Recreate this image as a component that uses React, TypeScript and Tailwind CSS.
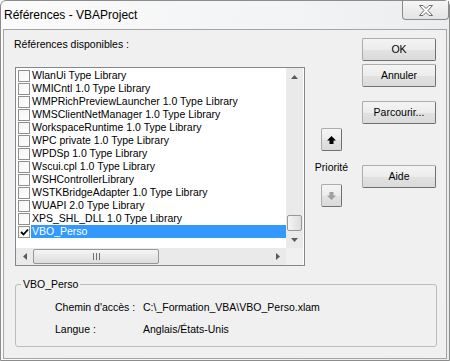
import React from "react";

const items = [
  "WlanUi Type Library",
  "WMICntl 1.0 Type Library",
  "WMPRichPreviewLauncher 1.0 Type Library",
  "WMSClientNetManager 1.0 Type Library",
  "WorkspaceRuntime 1.0 Type Library",
  "WPC private 1.0 Type Library",
  "WPDSp 1.0 Type Library",
  "Wscui.cpl 1.0 Type Library",
  "WSHControllerLibrary",
  "WSTKBridgeAdapter 1.0 Type Library",
  "WUAPI 2.0 Type Library",
  "XPS_SHL_DLL 1.0 Type Library",
];

const Tri = ({ dir }: { dir: "up" | "down" | "left" | "right" }) => {
  const pts = {
    up: "0,4 7,4 3.5,0",
    down: "0,0 7,0 3.5,4",
    left: "4,0 4,7 0,3.5",
    right: "0,0 0,7 4,3.5",
  }[dir];
  const vert = dir === "up" || dir === "down";
  return (
    <svg width={vert ? 7 : 4} height={vert ? 4 : 7} viewBox={vert ? "0 0 7 4" : "0 0 4 7"}>
      <polygon points={pts} fill="#5a5a5a" />
    </svg>
  );
};

const Row = ({ label, checked, selected }: { label: string; checked?: boolean; selected?: boolean }) => (
  <div className="flex h-[13px] items-center">
    <div className="ml-[2px] flex h-[12px] w-[12px] shrink-0 items-center justify-center border border-[#8e8f8f] bg-[linear-gradient(135deg,#f4f4f4,#ffffff)]">
      {checked && (
        <svg width="9" height="8" viewBox="0 0 9 8">
          <path d="M1 4 L3.5 6.5 L8 1.5" fill="none" stroke="#000" strokeWidth="1.8" />
        </svg>
      )}
    </div>
    <div
      className={
        selected
          ? "ml-px h-[13px] flex-1 whitespace-nowrap bg-[#3399ff] pl-px leading-[13px] text-white"
          : "ml-px h-[13px] flex-1 whitespace-nowrap pl-px leading-[13px] text-black"
      }
    >
      {label}
    </div>
  </div>
);

const Btn = ({ children, className }: { children: React.ReactNode; className?: string }) => (
  <div
    className={
      "flex h-[23px] w-[74px] items-center justify-center rounded-[2px] border border-[#acacac] border-r-[#707070] border-b-[#707070] bg-[linear-gradient(#f4f4f4,#ececec_50%,#e2e2e2_51%,#dadada)] text-black " +
      (className ?? "")
    }
  >
    {children}
  </div>
);

const ArrowBtn = ({ down }: { down?: boolean }) => (
  <div className="flex h-[23px] w-[21px] items-center justify-center rounded-[2px] border border-[#acacac] border-r-[#707070] border-b-[#707070] bg-[linear-gradient(#f4f4f4,#ececec_50%,#e2e2e2_51%,#dadada)]">
    <svg width="9" height="8" viewBox="0 0 9 8">
      {down ? (
        <polygon points="2.5,0 6.5,0 6.5,3.5 9,3.5 4.5,8 0,3.5 2.5,3.5" fill="#a0a0a0" />
      ) : (
        <polygon points="4.5,0 9,4.5 6.5,4.5 6.5,8 2.5,8 2.5,4.5 0,4.5" fill="#000" />
      )}
    </svg>
  </div>
);

export default function App() {
  return (
    <div className="flex h-[361px] w-[450px] flex-col rounded-t-[6px] border border-[#8c8c8c] bg-[linear-gradient(100deg,#fbfbfb,#f2f3f5_60%,#e9eaec)] font-['Liberation_Sans',Arial,sans-serif] text-[10.5px] text-black">
      <div className="flex h-[28px] shrink-0 items-start justify-between">
        <div className="ml-[3px] mt-[7px] text-[12px] leading-[15px]">Références - VBAProject</div>
        <div className="flex h-[19px] w-[47px] items-center justify-center rounded-b-[4px] border border-t-0 border-[#8a8a8a] bg-[linear-gradient(#f6f6f6,#e4e4e4)]">
          <svg width="14" height="11" viewBox="-0.5 -0.5 14 11">
            <polygon
              points="0,0 3.5,0 6.5,3 9.5,0 13,0 8.5,5 13,10 9.5,10 6.5,7 3.5,10 0,10 4.5,5"
              fill="#fdfdfd"
              stroke="#6b6b6b"
              strokeWidth="1"
              strokeLinejoin="round"
            />
          </svg>
        </div>
      </div>

      <div className="ml-[2px] mb-[1px] w-[444px] flex-1 border border-[#a5a5a5] bg-[#f0f0f0]">
        <div className="flex pt-[8px]">
          <div className="ml-[11px] w-[290px]">
            <div className="-ml-px h-[13px] leading-[13px]">Références disponibles :</div>
            <div className="mt-[16px] flex h-[199px] flex-col border border-[#828790] bg-white">
              <div className="flex h-[180px]">
                <div className="w-[270px] overflow-hidden pt-px">
                  {items.map((it) => (
                    <Row key={it} label={it} />
                  ))}
                  <Row label="VBO_Perso" checked selected />
                </div>
                <div className="flex w-[17px] flex-col bg-[#eaeaea]">
                  <div className="flex h-[17px] items-center justify-center">
                    <Tri dir="up" />
                  </div>
                  <div className="flex-1" />
                  <div className="mx-px h-[16px] rounded-[2px] border border-[#979797] bg-[linear-gradient(90deg,#f5f5f5,#dcdcdc)]" />
                  <div className="flex h-[17px] items-center justify-center">
                    <Tri dir="down" />
                  </div>
                </div>
              </div>
              <div className="flex h-[17px]">
                <div className="flex w-[270px] bg-[#eaeaea]">
                  <div className="flex w-[17px] items-center justify-center">
                    <Tri dir="left" />
                  </div>
                  <div className="my-px flex w-[126px] items-center justify-center gap-[2px] rounded-[2px] border border-[#979797] bg-[linear-gradient(#f5f5f5,#dcdcdc)]">
                    <div className="h-[7px] w-px bg-[#6e6e6e]" />
                    <div className="h-[7px] w-px bg-[#6e6e6e]" />
                    <div className="h-[7px] w-px bg-[#6e6e6e]" />
                  </div>
                  <div className="flex-1" />
                  <div className="flex w-[17px] items-center justify-center">
                    <Tri dir="right" />
                  </div>
                </div>
                <div className="w-[17px] bg-[#f0f0f0]" />
              </div>
            </div>
          </div>

          <div className="ml-[6px] flex w-[41px] flex-col items-center">
            <div className="mt-[90px]">
              <ArrowBtn />
            </div>
            <div className="mt-[10px] h-[13px] leading-[13px]">Priorité</div>
            <div className="mt-[10px]">
              <ArrowBtn down />
            </div>
          </div>

          <div className="ml-[10px] flex w-[74px] flex-col">
            <Btn>OK</Btn>
            <Btn className="mt-[3px]">Annuler</Btn>
            <Btn className="mt-[14px]">Parcourir...</Btn>
            <Btn className="mt-[41px]">Aide</Btn>
          </div>
        </div>

        <fieldset className="ml-[11px] mt-[12px] h-[69px] w-[422px] rounded-[3px] border border-[#bcbcbc] p-0">
          <legend className="ml-[5px] px-[2px] leading-[13px]">VBO_Perso</legend>
          <div className="mt-[10px] flex h-[13px] leading-[13px]">
            <div className="ml-[39px] w-[88px]">Chemin d'accès :</div>
            <div>C:\_Formation_VBA\VBO_Perso.xlam</div>
          </div>
          <div className="mt-[9px] flex h-[13px] leading-[13px]">
            <div className="ml-[39px] w-[88px]">Langue :</div>
            <div>Anglais/États-Unis</div>
          </div>
        </fieldset>
      </div>
    </div>
  );
}
